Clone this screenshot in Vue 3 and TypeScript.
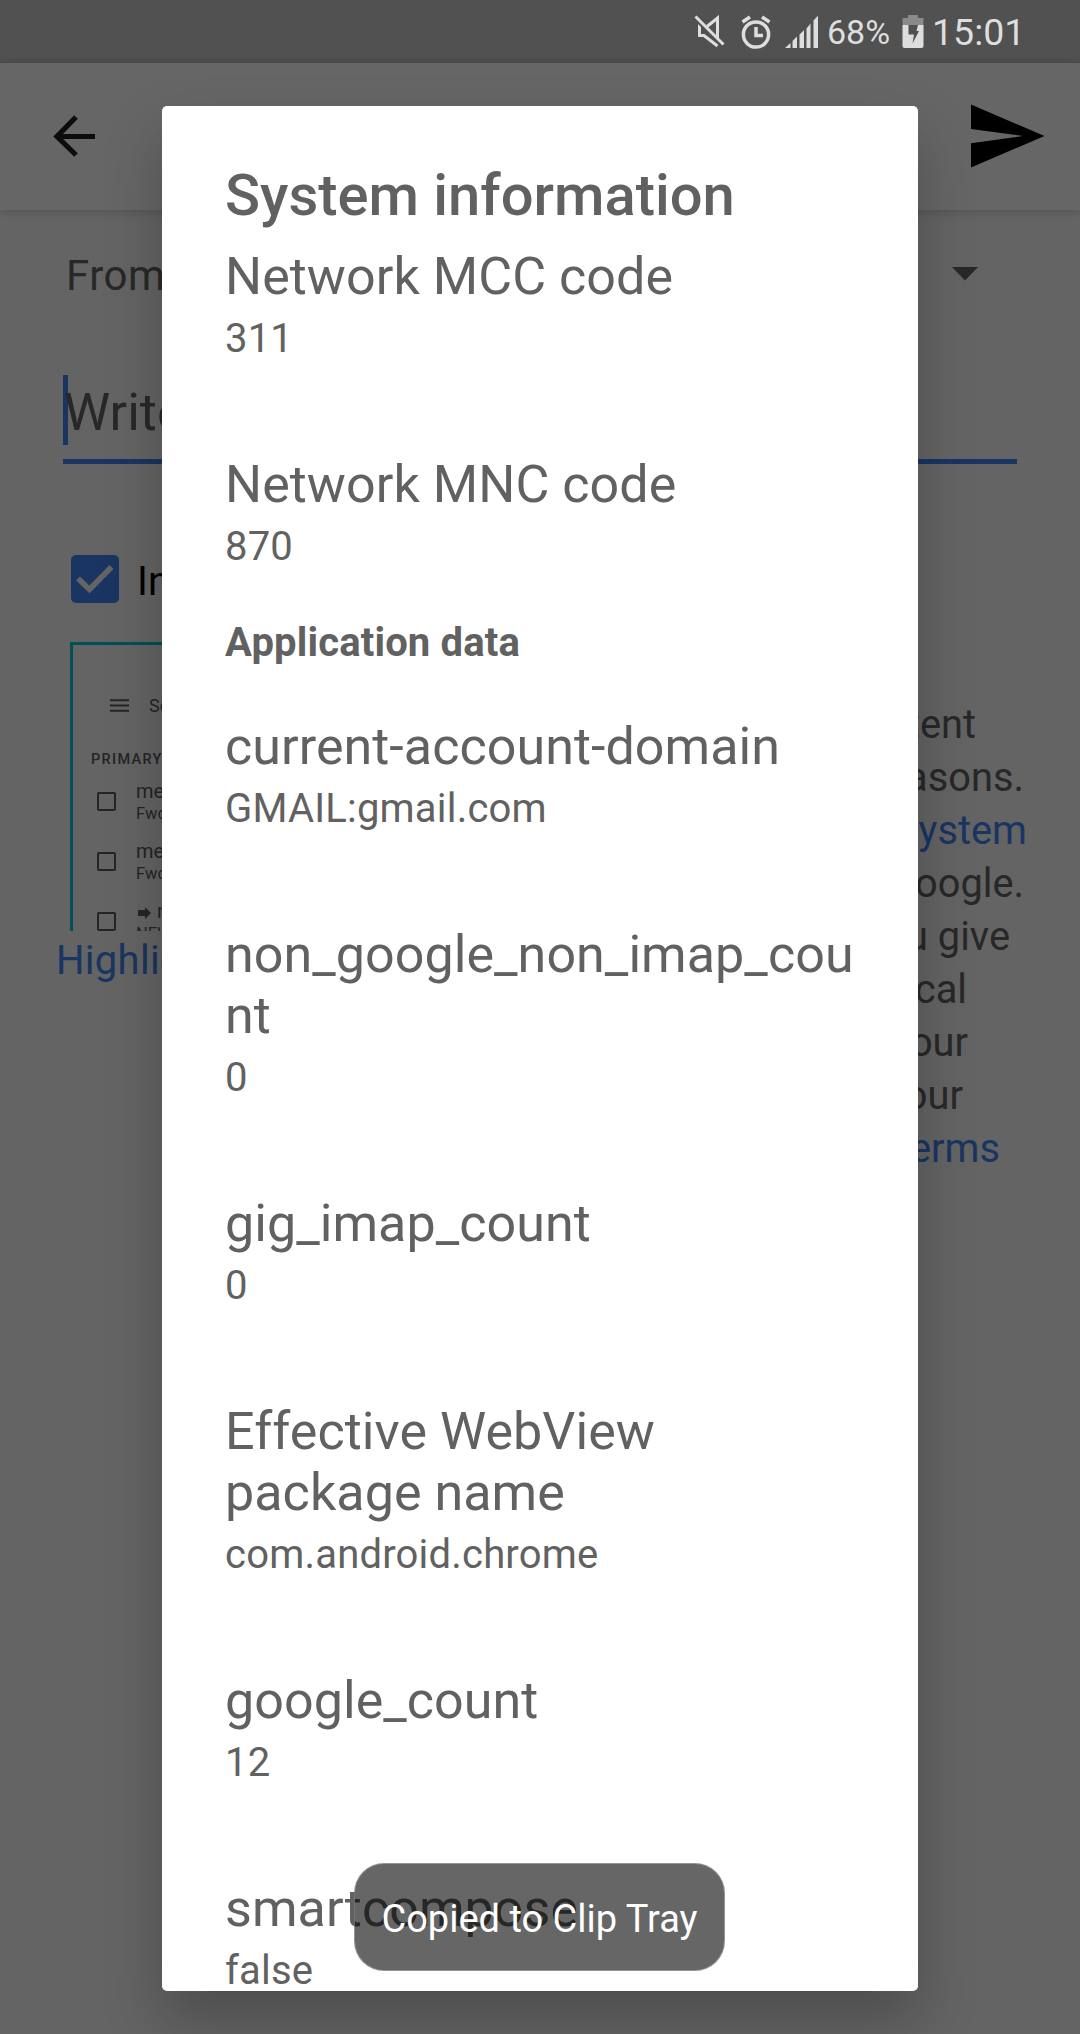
<script setup lang="ts">
interface Entry {
  label: string
  value: string
}

interface LegalLine {
  text: string
  link?: string
  inset: number
}

const network: Entry[] = [
  { label: 'Network MCC code', value: '311' },
  { label: 'Network MNC code', value: '870' },
]

const appData: Entry[] = [
  { label: 'current-account-domain', value: 'GMAIL:gmail.com' },
  { label: 'non_google_non_imap_count', value: '0' },
  { label: 'gig_imap_count', value: '0' },
  { label: 'Effective WebView package name', value: 'com.android.chrome' },
  { label: 'google_count', value: '12' },
  { label: 'smartcompose', value: 'false' },
]

const legal: LegalLine[] = [
  { text: 'content', inset: 104 },
  { text: 'reasons.', inset: 56 },
  { text: '', link: 'system', inset: 53 },
  { text: 'Google.', inset: 56 },
  { text: 'you give', inset: 70 },
  { text: 'technical', inset: 113 },
  { text: 'our', inset: 112 },
  { text: 'to our', inset: 117 },
  { text: '', link: 'Terms', inset: 80 },
]
</script>

<template>
  <div class="screen">
    <header class="status">
      <svg class="mute" viewBox="0 0 32 34" width="32" height="34">
        <path d="M10 10.500H5.500V20.500H10L23.500 31M13 11.500L23.500 3V25" />
        <path class="gap" d="M.5 3.500L27.500 30.500" />
        <path d="M1.500 1.500L29.500 29.500" />
      </svg>
      <svg class="alarm" viewBox="0 0 30 34" width="30" height="34">
        <circle cx="15" cy="19.500" r="12.600" />
        <path d="M15 12V20.500H22" />
        <path d="M1.500 7L9 2M28.500 7L21 2" />
      </svg>
      <svg class="signal" viewBox="0 0 34 34" width="34" height="34">
        <path d="M0 33L5.500 28V33ZM7.500 33V26L12 21.500V33ZM14.500 33V19.500L19 15V33ZM21.500 33V13.500L25.500 8.500V33ZM28.500 33V5.500L33 .8V33Z" />
      </svg>
      <span class="percent">68%</span>
      <svg class="battery" viewBox="0 0 22 34" width="22" height="34">
        <path fill="#8a8a8a" d="M6 0H16V3H21.500V10H.5V3H6Z" />
        <path fill="#dedede" d="M.5 10H21.500V31Q21.500 33 19.500 33H2.500Q.5 33 .5 31Z" />
        <path fill="#515151" d="M6.500 10H16L14.500 16H17L10.500 28.500L12 19.500H6.500Z" />
      </svg>
      <span class="clock">15:01</span>
    </header>

    <div class="toolbar">
      <svg class="back" viewBox="0 0 44 44" width="44" height="44">
        <path d="M43 22.500H5M24 3L5 22.500L24 41" />
      </svg>
      <svg class="send" viewBox="0 0 74 64" width="74" height="64">
        <path d="M0 .5L73.500 32L0 63.500V39.300L52 32L0 25Z" />
      </svg>
    </div>

    <main class="form">
      <div class="from">
        <span>From:</span>
        <svg viewBox="0 0 26 14" width="26" height="14"><path d="M0 0H26L13 13.500Z" /></svg>
      </div>
      <div class="feedback">
        <i class="caret"></i>
        <span>Write your feedback</span>
      </div>
      <div class="include">
        <span class="box">
          <svg viewBox="0 0 48 48" width="48" height="48"><path d="M7 23.500L18.500 34.500L40.500 12" /></svg>
        </span>
        <span class="include-text">Include screenshot</span>
      </div>
      <div class="details">
        <section class="left">
          <div class="thumb">
            <div class="search">
              <svg viewBox="0 0 20 14" width="19" height="14"><path d="M0 2H20M0 7.500H20M0 13H20" /></svg>
              <span>Search mail</span>
            </div>
            <div class="primary">PRIMARY</div>
            <div class="mail"><i></i><div><b>me</b><p>Fwd: hi</p></div></div>
            <div class="mail"><i></i><div><b>me</b><p>Fwd: hi</p></div></div>
            <div class="mail">
              <i></i>
              <div>
                <b><svg viewBox="0 0 13 12" width="13" height="12"><path d="M0 3H7V0L13 6L7 12V9H0Z" /></svg>me</b>
                <p>NEW</p>
              </div>
            </div>
          </div>
          <div class="highlight">Highlight</div>
        </section>
        <section class="legal">
          <p v-for="(line, i) in legal" :key="i" :style="{ paddingRight: line.inset + 'px' }">{{ line.text }}<a v-if="line.link">{{ line.link }}</a></p>
        </section>
      </div>
    </main>

    <div class="scrim"></div>

    <section class="dialog">
      <h1>System information</h1>
      <dl v-for="item in network" :key="item.label">
        <dt>{{ item.label }}</dt>
        <dd>{{ item.value }}</dd>
      </dl>
      <h2>Application data</h2>
      <dl v-for="item in appData" :key="item.label">
        <dt>{{ item.label }}</dt>
        <dd>{{ item.value }}</dd>
      </dl>
    </section>

    <div class="toast">Copied to Clip Tray</div>
  </div>
</template>

<style>
body {
  margin: 0;
}
</style>

<style scoped>
.screen {
  position: relative;
  width: 1080px;
  height: 2034px;
  overflow: hidden;
  background: #fafafa;
  font-family: Roboto, sans-serif;
  color: #646464;
}
svg {
  display: block;
  flex: none;
}
p {
  margin: 0;
}
.status {
  height: 63px;
  box-sizing: border-box;
  display: flex;
  align-items: flex-start;
  padding: 15px 0 0 694px;
  background: #515151;
  color: #dedede;
}
.mute {
  fill: none;
  stroke: #dedede;
  stroke-width: 3;
}
.mute .gap {
  stroke: #515151;
}
.alarm {
  margin-left: 15px;
  fill: none;
  stroke: #dedede;
  stroke-width: 3.500;
}
.signal {
  margin-left: 14px;
  fill: #dedede;
}
.percent {
  width: 75px;
  margin-left: 8px;
  font-size: 34px;
  line-height: 35px;
}
.clock {
  margin-left: 8px;
  font-size: 37.500px;
  line-height: 35px;
}
.toolbar {
  height: 147px;
  box-sizing: border-box;
  display: flex;
  justify-content: space-between;
  align-items: center;
  padding: 0 35px 1px 52px;
  background: #fff;
  box-shadow: 0 1px 10px rgba(0, 0, 0, 0.2);
}
.back {
  fill: none;
  stroke: #202020;
  stroke-width: 5.200;
}
.from {
  height: 124px;
  box-sizing: border-box;
  display: flex;
  justify-content: space-between;
  align-items: center;
  padding: 6px 102px 0 66px;
  font-size: 42px;
  letter-spacing: 0.500px;
}
.from svg {
  margin-bottom: 3px;
  fill: #646464;
}
.feedback {
  position: relative;
  display: flex;
  align-items: center;
  height: 93px;
  padding: 32px 0 0 1px;
  margin: 0 63px;
  border-bottom: 5px solid #4285f4;
  font-size: 52px;
  line-height: 61px;
}
.feedback span {
  z-index: 1;
}
.caret {
  position: absolute;
  left: 0;
  top: 41px;
  width: 5px;
  height: 70px;
  background: #4285f4;
}
.include {
  display: flex;
  align-items: center;
  gap: 18px;
  margin: 91px 0 0 71px;
  height: 48px;
}
.box {
  width: 48px;
  height: 48px;
  border-radius: 5px;
  background: #4285f4;
}
.box path {
  fill: none;
  stroke: #fafafa;
  stroke-width: 5.500;
}
.include-text {
  color: #000;
  font-size: 40px;
  line-height: 48px;
  padding-top: 5px;
}
.details {
  display: flex;
  margin-top: 39px;
}
.left {
  width: 340px;
}
.thumb {
  height: 289px;
  box-sizing: border-box;
  overflow: hidden;
  margin-left: 70px;
  border: solid #00c8da;
  border-width: 3px 3px 0;
  color: #5a5c60;
}
.search {
  display: flex;
  align-items: center;
  gap: 20px;
  margin: 48px 0 0 37px;
  height: 24px;
  font-size: 18px;
}
.search path {
  stroke: #5a5c60;
  stroke-width: 2;
}
.primary {
  margin: 34px 0 0 18px;
  font-size: 14.500px;
  font-weight: 500;
  letter-spacing: 1.300px;
  line-height: 17px;
}
.mail {
  display: flex;
  gap: 20px;
  height: 60px;
  margin-left: 24px;
}
.primary + .mail {
  margin-top: 12px;
}
.mail i {
  width: 15px;
  height: 15px;
  margin-top: 12px;
  border: 2px solid #5a5c60;
  border-radius: 2px;
}
.mail b {
  display: flex;
  align-items: center;
  font-weight: 400;
  font-size: 20px;
  line-height: 22px;
}
.mail b svg {
  margin: 3px 6px 0 2px;
  fill: #5a5c60;
}
.mail p {
  font-size: 16.500px;
  line-height: 24px;
}
.highlight {
  padding-left: 56px;
  margin-top: 7px;
  font-size: 40px;
  letter-spacing: 0.300px;
  line-height: 46px;
  color: #4285f4;
}
.legal {
  flex: 1;
  padding-top: 56px;
  font-size: 39.800px;
  line-height: 53px;
  text-align: right;
  white-space: nowrap;
}
.legal a {
  color: #4285f4;
}
.scrim {
  position: absolute;
  z-index: 2;
  inset: 63px 0 0;
  background: rgba(0, 0, 0, 0.6);
}
.dialog {
  position: absolute;
  z-index: 3;
  left: 162px;
  top: 106px;
  width: 756px;
  height: 1885px;
  box-sizing: border-box;
  padding: 55px 63px 0;
  overflow: hidden;
  border-radius: 5px;
  background: #fff;
  color: #616161;
  box-shadow: 0 30px 60px rgba(0, 0, 0, 0.24);
}
h1 {
  margin: 0;
  font-size: 57.900px;
  font-weight: 500;
  line-height: 68px;
  height: 85px;
}
dl {
  margin: 0 0 47px;
}
dt {
  font-size: 52px;
  letter-spacing: 0.060px;
  line-height: 61px;
  overflow-wrap: anywhere;
}
dd {
  height: 100px;
  box-sizing: border-box;
  margin: 0;
  padding-top: 8px;
  font-size: 40px;
  letter-spacing: 0.200px;
  line-height: 47px;
}
h2 {
  margin: -43px 0 50px;
  font-size: 40px;
  font-weight: 700;
  letter-spacing: 0.150px;
  line-height: 47px;
}
.toast {
  position: absolute;
  z-index: 4;
  left: 354px;
  top: 1863px;
  width: 371px;
  height: 108px;
  box-sizing: border-box;
  border: 1px solid rgba(255, 255, 255, 0.300);
  border-radius: 30px;
  background: rgba(0, 0, 0, 0.6);
  color: #fff;
  font-size: 38px;
  line-height: 110px;
  text-align: center;
  white-space: nowrap;
}
</style>
